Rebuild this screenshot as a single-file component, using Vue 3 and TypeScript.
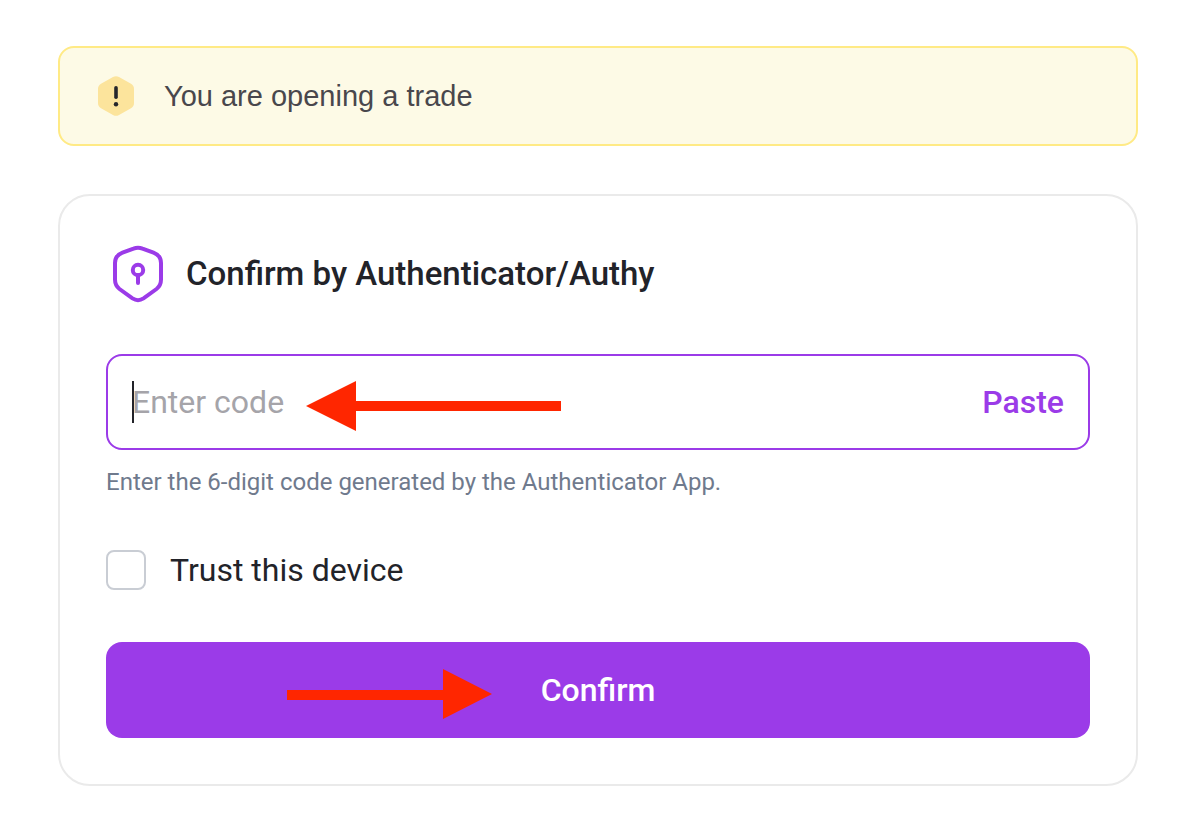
<script setup lang="ts">
import { ref } from 'vue'

const code = ref('')
const trusted = ref(false)

async function pasteCode(): Promise<void> {
  code.value = (await navigator.clipboard.readText()).trim()
}
</script>

<template>
  <main class="page">
    <div class="notice" role="status">
      <svg class="notice-icon" viewBox="0 0 40 40" aria-hidden="true">
        <path
          d="M17 1Q20-.7 23 1L35 7.800Q38 9.500 38 13V27Q38 30.500 35 32.200L23 39Q20 40.700 17 39L5 32.200Q2 30.500 2 27V13Q2 9.500 5 7.800Z"
          fill="#fce49c"
        />
        <path d="M20 11.800V21.200" stroke="#25262b" stroke-width="3.600" stroke-linecap="round" />
        <circle cx="20" cy="28.300" r="2.200" fill="#25262b" />
      </svg>
      <p class="notice-text">You are opening a trade</p>
    </div>

    <form class="card" @submit.prevent>
      <header class="heading">
        <svg class="shield" viewBox="0 0 64 64" fill="none" stroke="#9b3be8" stroke-width="4" aria-hidden="true">
          <path
            d="M27.500 6.600Q32 4.800 36.500 6.600L47.500 10.600Q55 13.500 55 21V37.500Q55 43.500 50.500 47L37.500 56.400Q32 60 26.500 56.400L13.500 47Q9 43.500 9 37.500V21Q9 13.500 16.500 10.600Z"
          />
          <circle cx="32" cy="28" r="5.200" />
          <path d="M32 33V41" stroke-linecap="round" />
        </svg>
        <h1 class="title">Confirm by Authenticator/Authy</h1>
      </header>

      <div class="field">
        <span class="caret" aria-hidden="true"></span>
        <input
          id="code"
          v-model="code"
          class="code-input"
          type="text"
          inputmode="numeric"
          autocomplete="one-time-code"
          maxlength="6"
          placeholder="Enter code"
          aria-label="Enter code"
          aria-describedby="code-hint"
        />
        <button class="paste" type="button" @click="pasteCode">Paste</button>
        <svg class="arrow arrow-left" viewBox="0 0 255 50" aria-hidden="true">
          <path d="M0 25L50 0V20H255V30H50V50Z" fill="#ff2600" />
        </svg>
      </div>
      <p id="code-hint" class="hint">Enter the 6-digit code generated by the Authenticator App.</p>

      <label class="trust" for="trust">
        <input id="trust" v-model="trusted" class="checkbox" type="checkbox" />
        <span>Trust this device</span>
      </label>

      <button class="confirm" type="submit">
        Confirm
        <svg class="arrow arrow-right" viewBox="0 0 205 50" aria-hidden="true">
          <path d="M205 25L156 0V21H0V31H156V50Z" fill="#ff2600" />
        </svg>
      </button>
    </form>
  </main>
</template>

<style>
body {
  margin: 0;
  background: #fff;
}
</style>

<style scoped>
.page {
  display: flex;
  flex-direction: column;
  gap: 48px;
  padding: 46px 40px 32px 58px;
  color: #222329;
  font-family: Roboto, "Noto Sans", sans-serif;
  font-size: 32px;
  line-height: 40px;
}

.notice {
  display: flex;
  align-items: center;
  gap: 28px;
  padding: 28px 36px;
  border: 2px solid #ffea85;
  border-radius: 16px;
  background: #fdfae6;
}

.notice-icon {
  flex: none;
  width: 40px;
  height: 40px;
}

.notice-text {
  margin: 0;
  color: #49474c;
  font-family: "Liberation Sans", Arial, sans-serif;
  font-size: 29px;
}

.card {
  display: flex;
  flex-direction: column;
  padding: 46px;
  border: 2px solid #eaeaea;
  border-radius: 32px;
}

.heading {
  display: flex;
  align-items: center;
  gap: 16px;
  margin-bottom: 48px;
}

.shield {
  flex: none;
  width: 64px;
  height: 64px;
}

.title {
  margin: 0;
  font-size: 33px;
  font-weight: 500;
}

.field {
  position: relative;
  display: flex;
  align-items: center;
  gap: 24px;
  padding: 24px;
  border: 2px solid #9b3be8;
  border-radius: 16px;
}

.caret {
  position: absolute;
  top: 25px;
  left: 24px;
  width: 2px;
  height: 42px;
  background: #222329;
}

.code-input {
  flex: 1;
  min-width: 0;
  height: 44px;
  padding: 0;
  border: 0;
  outline: 0;
  background: none;
  color: inherit;
  font: inherit;
  caret-color: transparent;
}

.code-input::placeholder {
  color: #a5a4a9;
  opacity: 1;
}

.paste {
  padding: 0;
  border: 0;
  background: none;
  color: #9b3be8;
  font: inherit;
  font-weight: 500;
  cursor: pointer;
}

.hint {
  margin: 16px 0 52px;
  color: #6f7a8d;
  font-size: 24px;
  line-height: 32px;
}

.trust {
  display: flex;
  align-items: center;
  align-self: flex-start;
  gap: 24px;
  margin-bottom: 52px;
}

.checkbox {
  appearance: none;
  flex: none;
  width: 40px;
  height: 40px;
  margin: 0;
  border: 2px solid #c9cdd4;
  border-radius: 8px;
  background: #fff;
}

.checkbox:checked {
  border-color: #9b3be8;
  background: #9b3be8;
}

.confirm {
  position: relative;
  padding: 28px 24px;
  border: 0;
  border-radius: 16px;
  background: #9b3be8;
  color: #fff;
  font: inherit;
  font-weight: 500;
  cursor: pointer;
}

.arrow {
  position: absolute;
  height: 50px;
  pointer-events: none;
}

.arrow-left {
  top: 25px;
  left: 198px;
  width: 255px;
}

.arrow-right {
  top: 27px;
  left: 181px;
  width: 205px;
}
</style>
